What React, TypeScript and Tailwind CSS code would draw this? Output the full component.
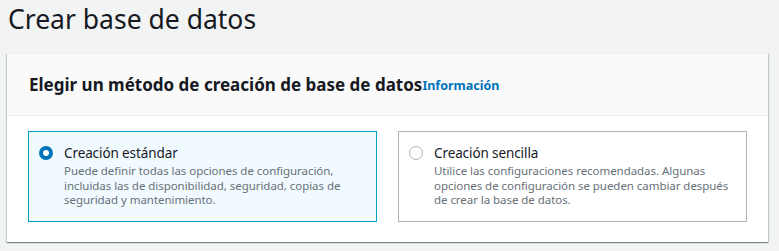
import React from "react";

function Option({ selected, title, desc }: { selected: boolean; title: string; desc: string }) {
  return (
    <div
      className={
        "flex h-[91px] w-[349px] gap-[11px] border pl-[10px] pr-[12px] pt-[12px] " +
        (selected ? "border-[#00a1c9] bg-[#f1faff]" : "border-[#aab7b8] bg-white")
      }
    >
      <div className="pt-[2px]">
        {selected ? (
          <div className="flex h-[14px] w-[14px] items-center justify-center rounded-full bg-[#0073bb]">
            <div className="h-[6px] w-[6px] rounded-full bg-white" />
          </div>
        ) : (
          <div className="h-[14px] w-[14px] rounded-full border border-[#aab7b8] bg-white" />
        )}
      </div>
      <div className="flex flex-col">
        <div className="text-[13.5px] leading-[18px] tracking-[-0.1px] text-[#16191f]">{title}</div>
        <div className="mt-[2px] text-[11.5px] leading-[14.5px] tracking-[-0.05px] text-[#687078]">{desc}</div>
      </div>
    </div>
  );
}

export default function App() {
  return (
    <div
      className="h-[251px] w-full overflow-hidden bg-[#f2f3f3]"
      style={{ fontFamily: '"Noto Sans", "Open Sans", sans-serif' }}
    >
      <h1 className="pl-[8px] pt-[1px] text-[26.5px] leading-[36px] text-[#16191f]">Crear base de datos</h1>
      <div className="ml-[7px] mt-[16px] w-[761px] border-t border-[#eaeded] bg-white shadow-[0_1px_1px_0_rgba(0,28,36,0.3),1px_1px_1px_0_rgba(0,28,36,0.15),-1px_1px_1px_0_rgba(0,28,36,0.15)]">
        <div className="flex h-[62px] items-center border-b border-[#eaeded] bg-[#fafafa] pl-[22px]">
          <span className="text-[17px] font-bold text-[#16191f]">Elegir un método de creación de base de datos</span>
          <span className="mt-[3px] text-[12.5px] font-bold text-[#0073bb]">Información</span>
        </div>
        <div className="flex gap-[21px] px-[21px] pb-[20px] pt-[15px]">
          <Option
            selected
            title="Creación estándar"
            desc="Puede definir todas las opciones de configuración, incluidas las de disponibilidad, seguridad, copias de seguridad y mantenimiento."
          />
          <Option
            selected={false}
            title="Creación sencilla"
            desc="Utilice las configuraciones recomendadas. Algunas opciones de configuración se pueden cambiar después de crear la base de datos."
          />
        </div>
      </div>
    </div>
  );
}
